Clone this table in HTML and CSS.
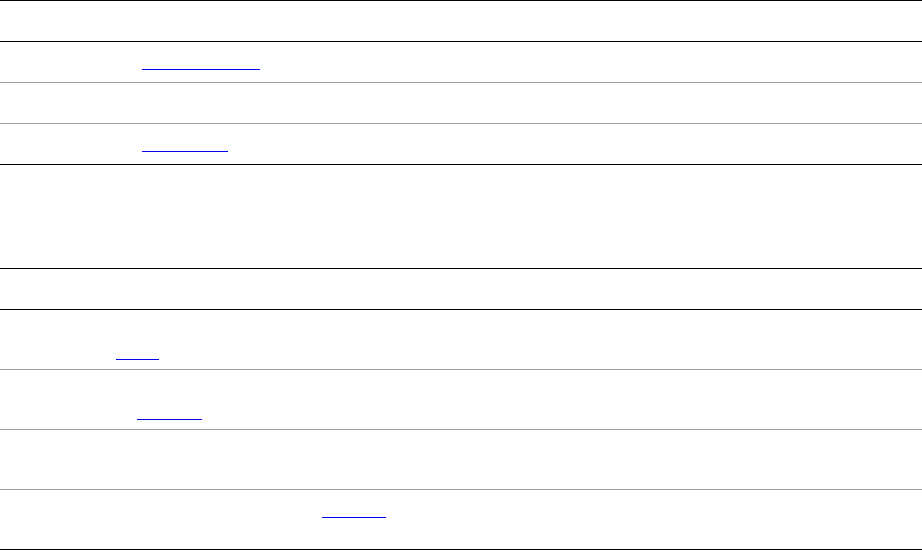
FILE: index.html
```html
<!DOCTYPE html>
<html lang="en">
<head>
<meta charset="utf-8">
<title>Record details</title>
<link rel="stylesheet" href="styles.css">
</head>
<body>
<div class="sheet">
  <div class="row row-first line-black">
    <div class="cell"><span class="line">Record details</span></div>
  </div>
  <div class="row line-gray">
    <div class="cell"><div class="line"><span class="lab lab-142">Website</span><a class="link w118" href="#">example.com</a></div></div>
  </div>
  <div class="row line-gray">
    <div class="cell"><div class="line">Status: active</div></div>
  </div>
  <div class="row line-black">
    <div class="cell"><div class="line"><span class="lab lab-142">Source</span><a class="link w86" href="#">Records</a></div></div>
  </div>
  <div class="row row-block line-black">
    <div class="cell"><div class="line">Notes</div></div>
  </div>
  <div class="row line-black">
    <div class="cell"><div class="line">References</div></div>
  </div>
  <div class="row row-tall line-gray">
    <div class="cell">
      <div class="line">First reference entry</div>
      <div class="line"><span class="lab lab-116">See also</span><a class="link w43" href="#">Index</a></div>
    </div>
  </div>
  <div class="row row-tall line-gray">
    <div class="cell">
      <div class="line">Second reference entry</div>
      <div class="line"><span class="lab lab-137">Published in</span><a class="link w65" href="#">Archive</a></div>
    </div>
  </div>
  <div class="row row-tall line-gray">
    <div class="cell">
      <div class="line">Third reference entry</div>
      <div class="line">No link available</div>
    </div>
  </div>
  <div class="row row-tall line-black">
    <div class="cell">
      <div class="line"><span class="lab lab-322">Fourth reference entry, from</span><a class="link w64" href="#">Library</a></div>
      <div class="line">Last checked</div>
    </div>
  </div>
</div>
</body>
</html>
```
FILE: styles.css
```css
* {
  box-sizing: border-box;
}

html, body {
  margin: 0;
  padding: 0;
  background: #ffffff;
}

body {
  font-family: "Liberation Serif", "Times New Roman", serif;
  font-size: 16px;
  color: #ffffff;
}

.sheet {
  display: flex;
  flex-direction: column;
  width: 922px;
}

.row {
  height: 41px;
  border-bottom: 1px solid #000000;
}

.row-first {
  height: 42px;
  border-top: 1px solid #000000;
}

.row-block {
  height: 104px;
}

.row-tall {
  height: 60px;
}

.line-black {
  border-bottom-color: #000000;
}

.line-gray {
  border-bottom-color: #a0a0a0;
}

.cell {
  display: flex;
  flex-direction: column;
  gap: 3px;
  padding-top: 9px;
}

.line {
  display: flex;
  height: 19px;
  line-height: 18px;
  white-space: nowrap;
}

.lab {
  flex: none;
}

.lab-142 { width: 142px; }
.lab-116 { width: 116px; }
.lab-137 { width: 137px; }
.lab-322 { width: 322px; }

.link {
  flex: none;
  display: block;
  height: 19px;
  color: #ffffff;
  text-decoration: none;
  border-bottom: 1px solid #0000ee;
}

.w118 { width: 118px; }
.w86 { width: 86px; }
.w43 { width: 43px; }
.w65 { width: 65px; }
.w64 { width: 64px; }
```
